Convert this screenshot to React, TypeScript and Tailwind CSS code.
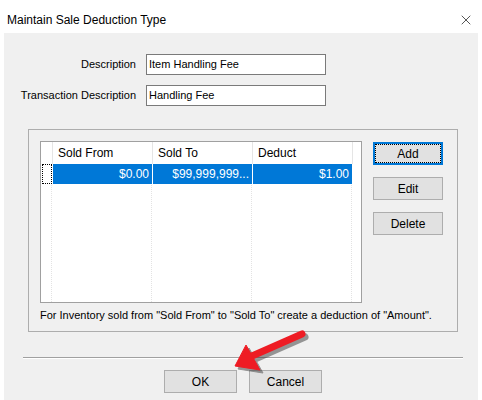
import { X } from "lucide-react";

const ui = { fontFamily: '"Liberation Sans", Arial, sans-serif' };

function Field({ label, value }: { label: string; value: string }) {
  return (
    <div className="flex items-center h-[21px]">
      <span className="w-[128px] text-right text-[11px] text-black">{label}</span>
      <div className="ml-[10px] w-[180px] h-[21px] bg-white border border-[#7a7a7a] flex items-center px-[2px] text-[11px] text-black">
        {value}
      </div>
    </div>
  );
}

function DlgButton({ label, focused = false, className = "" }: { label: string; focused?: boolean; className?: string }) {
  return (
    <button
      className={`h-[23px] bg-[#e1e1e1] text-[12px] text-black flex items-center justify-center ${
        focused ? "border-2 border-[#0078d7]" : "border border-[#adadad]"
      } ${className}`}
    >
      {focused ? (
        <span className="w-full h-full border border-dotted border-black flex items-center justify-center">{label}</span>
      ) : (
        label
      )}
    </button>
  );
}

// Header titles and the single selected row
const cols = ["Sold From", "Sold To", "Deduct"];
const row = ["$0.00", "$99,999,999...", "$1.00"];

function DeductionGrid() {
  return (
    <div className="w-[322px] h-[162px] bg-white border border-[#a0a0a0] relative">
      {/* dotted column lines through the body */}
      <div className="absolute inset-0 flex pointer-events-none">
        <div className="w-[11px] border-r border-dotted border-[#e3e3e3]" />
        <div className="w-[100px] border-r border-dotted border-[#e3e3e3]" />
        <div className="w-[100px] border-r border-dotted border-[#e3e3e3]" />
        <div className="w-[100px] border-r border-dotted border-[#e3e3e3]" />
      </div>
      <div className="relative flex h-[22px] text-[12px] text-black">
        <div className="w-[11px] bg-white" />
        {cols.map((c) => (
          <div key={c} className="w-[100px] bg-white border-l border-[#e5e5e5] flex items-center pl-[5px]">
            {c}
          </div>
        ))}
        <div className="w-[1px] bg-[#e5e5e5]" />
      </div>
      <div className="relative flex h-[20px] text-[12px] text-white">
        <div className="w-[11px] pl-[1px]">
          <div className="w-[10px] h-[20px] bg-white border border-dotted border-black" />
        </div>
        {row.map((v, i) => (
          <div
            key={i}
            className="w-[100px] bg-[#0078d7] border-l border-white flex items-center justify-end pr-[3px]"
          >
            {v}
          </div>
        ))}
      </div>
    </div>
  );
}

function RedArrow() {
  return (
    <svg className="absolute left-0 top-0 pointer-events-none" width="482" height="400" viewBox="0 0 482 400">
      <g transform="translate(3,3)" fill="#3a3a3a" stroke="#3a3a3a" opacity="0.5">
        <line x1="302" y1="334" x2="252" y2="356" strokeWidth="7" strokeLinecap="round" />
        <polygon points="235,366 246,345 260,370" />
      </g>
      <g fill="#ee1c24" stroke="#ee1c24">
        <line x1="302" y1="334" x2="252" y2="356" strokeWidth="7" strokeLinecap="round" />
        <polygon points="235,366 246,345 260,370" strokeLinejoin="round" />
      </g>
    </svg>
  );
}

export default function App() {
  return (
    <div className="w-[482px] h-[400px] bg-white relative overflow-hidden flex flex-col" style={ui}>
      {/* Title bar */}
      <div className="h-[33px] flex items-start justify-between pl-[7px] pr-[8px] pt-[12px] flex-shrink-0">
        <span className="text-[12px] leading-[16px] text-black">Maintain Sale Deduction Type</span>
        <X className="w-[16px] h-[16px] text-black" strokeWidth={1} />
      </div>

      {/* Client area */}
      <div className="flex-1 mx-[4px] bg-[#f0f0f0] flex flex-col">
        <div className="flex flex-col gap-[10px] pt-[21px] pl-[4px]">
          <Field label="Description" value="Item Handling Fee" />
          <Field label="Transaction Description" value="Handling Fee" />
        </div>

        {/* Grid group */}
        <div className="ml-[24px] mt-[23px] w-[430px] h-[203px] border border-[#adadad] flex flex-col pl-[11px] pt-[11px]">
          <div className="flex">
            <DeductionGrid />
            <div className="ml-[11px] pt-[1px] flex flex-col gap-[12px]">
              <DlgButton label="Add" focused className="w-[70px]" />
              <DlgButton label="Edit" className="w-[70px]" />
              <DlgButton label="Delete" className="w-[70px]" />
            </div>
          </div>
          <div className="mt-[4px] text-[11px] text-black leading-[16px]">
            For Inventory sold from "Sold From" to "Sold To" create a deduction of "Amount".
          </div>
        </div>

        <div className="ml-[19px] mt-[25px] w-[440px] h-[2px] border-t border-[#a0a0a0] border-b border-b-white" />

        <div className="flex gap-[12px] mt-[11px] pl-[160px]">
          <DlgButton label="OK" className="w-[73px]" />
          <DlgButton label="Cancel" className="w-[73px]" />
        </div>
      </div>

      <RedArrow />
    </div>
  );
}
